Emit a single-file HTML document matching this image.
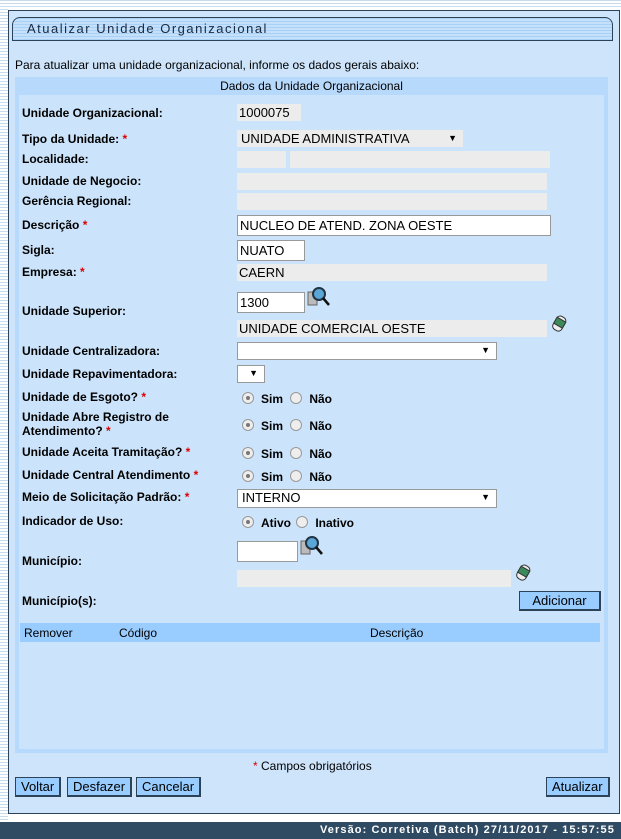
<!DOCTYPE html>
<html><head><meta charset="utf-8"><style>
*{margin:0;padding:0;box-sizing:border-box}
body{width:621px;height:839px;position:relative;background:#fff;font-family:"Liberation Sans",Arial,sans-serif;font-size:12px;color:#000;overflow:hidden}
.stripes{position:absolute;left:0;top:0;width:8px;height:822px;background:repeating-linear-gradient(#c8dcf0 0 1px,#fff 1px 3px)}
.topstr{position:absolute;left:0;top:0;width:621px;height:8px;background:repeating-linear-gradient(#c8dcf0 0 1px,#fff 1px 3px)}
.panel{position:absolute;left:8px;top:10px;width:612px;height:804px;background:#cde4fa;border:1px solid #2c4258}
.title{position:absolute;left:12px;top:17px;width:601px;height:24px;border:1px solid #2c4258;border-radius:8px 8px 0 0;background:repeating-linear-gradient(#a9d0f5 0 1px,#c4e0fb 1px 3px);font-size:13px;letter-spacing:1.5px;padding:3px 0 0 14px;color:#1a2a40}
.a{position:absolute;white-space:nowrap}
.box{position:absolute;left:15px;top:77px;width:593px;height:676px;background:#b7d9fb}
.inner{position:absolute;left:19px;top:95px;width:585px;height:654px;background:#cce4fb}
.hdr{position:absolute;left:15px;top:77px;width:593px;height:18px;text-align:center;padding-top:2px}
.l{position:absolute;left:22px;font-weight:bold;white-space:nowrap}
.r{color:#d00}
.g{position:absolute;background:#ececec;height:17px;padding:1px 2px;font-size:13px}
.in{position:absolute;background:#fff;border:1px solid #999;height:21px;padding:2px;font-size:13px}
.sel{position:absolute;background:#fff;border:1px solid #999;height:18px;font-size:13px;padding:0 3px}
.sel i{position:absolute;right:6px;top:2px;font-style:normal;font-size:9px}
.rad{position:absolute;font-weight:bold;white-space:nowrap}
.rad b{display:inline-block;width:12px;height:12px;border-radius:50%;border:1px solid #999;background:#eee;vertical-align:-1px;margin-right:7px;position:relative}
.rad b.on:after{content:"";position:absolute;left:3px;top:3px;width:4px;height:4px;border-radius:50%;background:#777}
.btn{position:absolute;background:#99ccff;border:1px solid #2c4258;border-right-width:2px;border-bottom-width:2px;height:20px;font-size:13px;padding:1px 5px;color:#000}
.foot{position:absolute;left:0;top:822px;width:621px;height:17px;background:#2f4a63;color:#fff;font-weight:bold;font-size:11px;letter-spacing:1.1px;text-align:right;padding:2px 6px 0 0}
</style></head><body>
<div class="stripes"></div><div class="topstr"></div>
<div class="panel"></div>
<div class="title">Atualizar Unidade Organizacional</div>
<div class="a" style="left:15px;top:58px">Para atualizar uma unidade organizacional, informe os dados gerais abaixo:</div>
<div class="box"></div><div class="inner"></div>
<div class="hdr">Dados da Unidade Organizacional</div>

<div class="l" style="top:106px">Unidade Organizacional:</div>
<div class="g" style="left:237px;top:104px;width:64px">1000075</div>
<div class="l" style="top:132px">Tipo da Unidade: <span class="r">*</span></div>
<div class="g" style="left:237px;top:130px;width:226px;padding-left:4px">UNIDADE ADMINISTRATIVA<span style="position:absolute;right:6px;top:3px;font-size:9px">▼</span></div>
<div class="l" style="top:152px">Localidade:</div>
<div class="g" style="left:237px;top:151px;width:49px"></div>
<div class="g" style="left:290px;top:151px;width:260px"></div>
<div class="l" style="top:174px">Unidade de Negocio:</div>
<div class="g" style="left:237px;top:173px;width:310px"></div>
<div class="l" style="top:194px">Gerência Regional:</div>
<div class="g" style="left:237px;top:193px;width:310px"></div>
<div class="l" style="top:218px">Descrição <span class="r">*</span></div>
<div class="in" style="left:237px;top:215px;width:314px">NUCLEO DE ATEND. ZONA OESTE</div>
<div class="l" style="top:243px">Sigla:</div>
<div class="in" style="left:237px;top:240px;width:68px">NUATO</div>
<div class="l" style="top:265px">Empresa: <span class="r">*</span></div>
<div class="g" style="left:237px;top:264px;width:310px">CAERN</div>
<div class="l" style="top:304px">Unidade Superior:</div>
<div class="in" style="left:237px;top:292px;width:68px">1300</div>
<svg class="a" style="left:307px;top:286px" width="24" height="22"><rect x="1" y="6" width="9" height="13" fill="#bbb" stroke="#666"/><circle cx="12" cy="8" r="6" fill="#5aa6d6" stroke="#234" stroke-width="2"/><line x1="16" y1="12" x2="22" y2="19" stroke="#111" stroke-width="2.5"/></svg>
<div class="g" style="left:237px;top:320px;width:310px">UNIDADE COMERCIAL OESTE</div>
<svg class="a" style="left:550px;top:314px" width="18" height="20"><g transform="rotate(30 9 10)"><rect x="4" y="2" width="10" height="15" rx="4" fill="#eee" stroke="#333"/><rect x="4" y="5" width="10" height="7" fill="#3c8a5a" stroke="#333"/></g></svg>
<div class="l" style="top:344px">Unidade Centralizadora:</div>
<div class="sel" style="left:237px;top:342px;width:260px"><i>▼</i></div>
<div class="l" style="top:367px">Unidade Repavimentadora:</div>
<div class="sel" style="left:237px;top:365px;width:28px"><i>▼</i></div>
<div class="l" style="top:390px">Unidade de Esgoto? <span class="r">*</span></div>
<div class="rad" style="left:242px;top:392px"><b class="on"></b>Sim <b style="margin-left:4px"></b>Não</div>
<div class="l" style="top:410px;line-height:14px">Unidade Abre Registro de<br>Atendimento? <span class="r">*</span></div>
<div class="rad" style="left:242px;top:419px"><b class="on"></b>Sim <b style="margin-left:4px"></b>Não</div>
<div class="l" style="top:445px">Unidade Aceita Tramitação? <span class="r">*</span></div>
<div class="rad" style="left:242px;top:447px"><b class="on"></b>Sim <b style="margin-left:4px"></b>Não</div>
<div class="l" style="top:468px">Unidade Central Atendimento <span class="r">*</span></div>
<div class="rad" style="left:242px;top:470px"><b class="on"></b>Sim <b style="margin-left:4px"></b>Não</div>
<div class="l" style="top:490px">Meio de Solicitação Padrão: <span class="r">*</span></div>
<div class="sel" style="left:237px;top:489px;width:260px;height:19px;padding-left:4px">INTERNO<i>▼</i></div>
<div class="l" style="top:514px">Indicador de Uso:</div>
<div class="rad" style="left:242px;top:516px"><b class="on"></b>Ativo <b style="margin-left:2px"></b>Inativo</div>
<div class="l" style="top:554px">Município:</div>
<div class="in" style="left:237px;top:541px;width:61px"></div>
<svg class="a" style="left:300px;top:535px" width="24" height="22"><rect x="1" y="6" width="9" height="13" fill="#bbb" stroke="#666"/><circle cx="12" cy="8" r="6" fill="#5aa6d6" stroke="#234" stroke-width="2"/><line x1="16" y1="12" x2="22" y2="19" stroke="#111" stroke-width="2.5"/></svg>
<div class="g" style="left:237px;top:570px;width:274px"></div>
<svg class="a" style="left:514px;top:563px" width="18" height="20"><g transform="rotate(30 9 10)"><rect x="4" y="2" width="10" height="15" rx="4" fill="#eee" stroke="#333"/><rect x="4" y="5" width="10" height="7" fill="#3c8a5a" stroke="#333"/></g></svg>
<div class="l" style="top:594px">Município(s):</div>
<div class="btn" style="left:519px;top:591px;width:82px;text-align:center">Adicionar</div>
<div class="a" style="left:20px;top:623px;width:580px;height:19px;background:#99ccff"></div>
<div class="a" style="left:24px;top:626px">Remover</div>
<div class="a" style="left:119px;top:626px">Código</div>
<div class="a" style="left:370px;top:626px">Descrição</div>
<div class="a" style="left:253px;top:759px"><span class="r">*</span> Campos obrigatórios</div>
<div class="btn" style="left:15px;top:777px">Voltar</div>
<div class="btn" style="left:67px;top:777px">Desfazer</div>
<div class="btn" style="left:136px;top:777px">Cancelar</div>
<div class="btn" style="left:546px;top:777px">Atualizar</div>
<div class="foot">Versão: Corretiva (Batch) 27/11/2017 - 15:57:55</div>
</body></html>
